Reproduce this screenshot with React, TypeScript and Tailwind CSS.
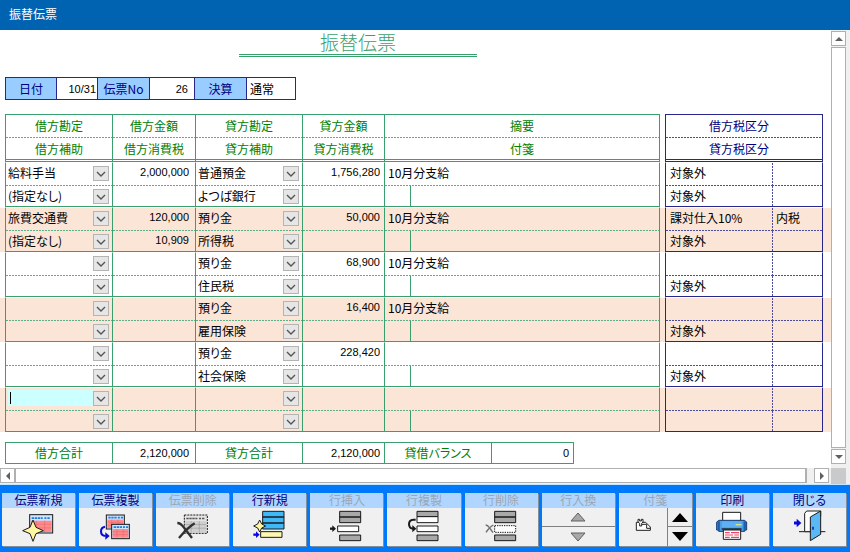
import type { ReactNode } from "react";
import clsx from "clsx";

type Line = {
  debit: [string, string];
  debitAmount: [string, string];
  credit: [string, string];
  creditAmount: [string, string];
  memo: string;
  tax: [string, string];
  taxKind: string;
};

const lines: Line[] = [
  { debit: ["給料手当", "(指定なし)"], debitAmount: ["2,000,000", ""], credit: ["普通預金", "よつば銀行"], creditAmount: ["1,756,280", ""], memo: "10月分支給", tax: ["対象外", "対象外"], taxKind: "" },
  { debit: ["旅費交通費", "(指定なし)"], debitAmount: ["120,000", "10,909"], credit: ["預り金", "所得税"], creditAmount: ["50,000", ""], memo: "10月分支給", tax: ["課対仕入10%", "対象外"], taxKind: "内税" },
  { debit: ["", ""], debitAmount: ["", ""], credit: ["預り金", "住民税"], creditAmount: ["68,900", ""], memo: "10月分支給", tax: ["", "対象外"], taxKind: "" },
  { debit: ["", ""], debitAmount: ["", ""], credit: ["預り金", "雇用保険"], creditAmount: ["16,400", ""], memo: "10月分支給", tax: ["", "対象外"], taxKind: "" },
  { debit: ["", ""], debitAmount: ["", ""], credit: ["預り金", "社会保険"], creditAmount: ["228,420", ""], memo: "", tax: ["", "対象外"], taxKind: "" },
  { debit: ["", ""], debitAmount: ["", ""], credit: ["", ""], creditAmount: ["", ""], memo: "", tax: ["", ""], taxKind: "" },
];

const numeric = "font-['Liberation_Sans',sans-serif] text-[11px] text-right";
const greenDash = "[background:repeating-linear-gradient(90deg,#5fae88_0_2px,transparent_2px_3px)_bottom/100%_1px_no-repeat]";
const navyDash = "[background:repeating-linear-gradient(90deg,#4c4c9c_0_2px,transparent_2px_3px)_bottom/100%_1px_no-repeat]";
const navyDashV = "[background:repeating-linear-gradient(180deg,#4c4c9c_0_2px,transparent_2px_3px)_left/1px_100%_no-repeat]";
const navyDashBoth =
  "[background:repeating-linear-gradient(180deg,#4c4c9c_0_2px,transparent_2px_3px)_left/1px_100%_no-repeat,repeating-linear-gradient(90deg,#4c4c9c_0_2px,transparent_2px_3px)_bottom/100%_1px_no-repeat]";

function Field({ label, value, className }: { label: string; value: string; className?: string }) {
  return <input type="text" aria-label={label} defaultValue={value} className={clsx("block h-[18px] w-full min-w-0 bg-transparent outline-none", className)} />;
}

function Combo({ label, value, active }: { label: string; value: string; active?: boolean }) {
  return (
    <div className="relative flex h-5 items-center pr-[18px] pl-0.5">
      <select aria-label={label} defaultValue={value} className={clsx("h-4 w-full min-w-0 appearance-none outline-none", active ? "bg-[#ccffff]" : "bg-transparent")}>
        <option value={value}>{value}</option>
      </select>
      {active && <span className="absolute top-1 left-1 h-3 w-px bg-black" />}
      <span className="pointer-events-none absolute top-[3px] right-[3px] flex h-[15px] w-4 items-center justify-center border border-[#b4b4b4] bg-[#e6e6e6]">
        <svg width="10" height="6" viewBox="0 0 10 6" fill="none" stroke="#555" strokeWidth="1.4">
          <path d="M1 1l4 4 4-4" />
        </svg>
      </span>
    </div>
  );
}

function EntryRows({ line, index }: { line: Line; index: number }) {
  const no = `${index + 1}行目 `;
  const shade = index % 2 === 1 ? "bg-[#fbe5d6]" : "bg-white";
  const top = "h-6 border-t border-l border-t-white border-l-[#3a9f6e] align-top";
  const bottom = "h-[21px] border-b border-l border-[#3a9f6e] align-top";
  return (
    <tbody className={shade}>
      <tr>
        <td className="border-t border-white" />
        <td className={clsx(top, greenDash)}><Combo label={no + "借方勘定"} value={line.debit[0]} active={index === 5} /></td>
        <td className={clsx(top, greenDash)}><Field label={no + "借方金額"} value={line.debitAmount[0]} className={clsx("pr-1.5", numeric)} /></td>
        <td className={clsx(top, greenDash)}><Combo label={no + "貸方勘定"} value={line.credit[0]} /></td>
        <td className={clsx(top, greenDash)}><Field label={no + "貸方金額"} value={line.creditAmount[0]} className={clsx("pr-1", numeric)} /></td>
        <td colSpan={2} className={clsx(top, greenDash, "border-r border-r-[#3a9f6e]")}><Field label={no + "摘要"} value={line.memo} className="pl-[3px]" /></td>
        <td className="border-t border-white" />
        <td className={clsx("h-6 border-t border-l border-t-white border-l-[#26268c] align-top", navyDash)}><Field label={no + "借方税区分"} value={line.tax[0]} className="pl-1" /></td>
        <td className={clsx("h-6 border-t border-r border-t-white border-r-[#26268c] align-top", navyDashBoth)}><Field label={no + "税処理"} value={line.taxKind} className="pl-1" /></td>
        <td className="border-t border-white" />
      </tr>
      <tr>
        <td />
        <td className={bottom}><Combo label={no + "借方補助"} value={line.debit[1]} /></td>
        <td className={bottom}><Field label={no + "借方消費税"} value={line.debitAmount[1]} className={clsx("pr-1.5", numeric)} /></td>
        <td className={bottom}><Combo label={no + "貸方補助"} value={line.credit[1]} /></td>
        <td className={bottom}><Field label={no + "貸方消費税"} value={line.creditAmount[1]} className={clsx("pr-1", numeric)} /></td>
        <td className={bottom} />
        <td className={clsx(bottom, "border-r")}><Field label={no + "付箋"} value="" className="pl-1" /></td>
        <td />
        <td className="h-[21px] border-b border-l border-[#26268c] align-top"><Field label={no + "貸方税区分"} value={line.tax[1]} className="pl-1" /></td>
        <td className={clsx("h-[21px] border-r border-b border-[#26268c] align-top", navyDashV)} />
        <td />
      </tr>
    </tbody>
  );
}

function VoucherTable() {
  const head1 = clsx("h-6 border-t border-l border-[#3a9f6e] pb-0.5 font-normal", greenDash);
  const head2 = "h-6 border-b-3 border-l border-[#3a9f6e] font-normal [border-bottom-style:double]";
  return (
    <table className="mt-3.5 w-full table-fixed border-separate border-spacing-0">
      <colgroup>
        <col className="w-[5px]" />
        <col className="w-[107px]" />
        <col className="w-[83px]" />
        <col className="w-[107px]" />
        <col className="w-[82px]" />
        <col className="w-[26px]" />
        <col />
        <col className="w-[5px]" />
        <col className="w-[107px]" />
        <col className="w-[51px]" />
        <col className="w-2" />
      </colgroup>
      <thead className="text-[#008000]">
        <tr>
          <td />
          <th className={head1}>借方勘定</th>
          <th className={head1}>借方金額</th>
          <th className={head1}>貸方勘定</th>
          <th className={head1}>貸方金額</th>
          <th colSpan={2} className={clsx(head1, "border-r")}>摘要</th>
          <td />
          <th colSpan={2} className={clsx("h-6 border-x border-t border-[#26268c] pr-2.5 pb-0.5 font-normal text-[#000080]", navyDash)}>借方税区分</th>
          <td />
        </tr>
        <tr>
          <td />
          <th className={head2}>借方補助</th>
          <th className={head2}>借方消費税</th>
          <th className={head2}>貸方補助</th>
          <th className={head2}>貸方消費税</th>
          <th colSpan={2} className={clsx(head2, "border-r")}>付箋</th>
          <td />
          <th colSpan={2} className="h-6 border-x border-b-3 border-[#26268c] pr-2.5 font-normal text-[#000080] [border-bottom-style:double]">貸方税区分</th>
          <td />
        </tr>
      </thead>
      {lines.map((line, i) => (
        <EntryRows key={i} line={line} index={i} />
      ))}
    </table>
  );
}

function Arrow({ d }: { d: string }) {
  return (
    <svg width="8" height="8" viewBox="0 0 8 8" fill="#606060">
      <path d={d} />
    </svg>
  );
}

function ToolLabel({ text, disabled }: { text: string; disabled?: boolean }) {
  return (
    <span className={clsx("block h-[15px] bg-[#b0d6ff] text-center leading-[14px]", disabled ? "text-[#9aa6b4]" : "text-[#000080]")}>{text}</span>
  );
}

function Tool({ text, disabled, box, children }: { text: string; disabled?: boolean; box: string; children: ReactNode }) {
  return (
    <button type="button" disabled={disabled} className="min-w-0 bg-[#f0f0f0] shadow-[1px_1px_0_#7f8fa0]">
      <ToolLabel text={text} disabled={disabled} />
      <svg width="73" height="38" viewBox={box} className="mx-auto block" fill="none" stroke="#1a1a1a" strokeWidth="3">
        {children}
      </svg>
    </button>
  );
}

function Slip({ x, y, w, h, gray }: { x: number; y: number; w: number; h: number; gray?: boolean }) {
  const ink = gray ? "#8c8c8c" : "#e06070";
  const top = y + h * 0.33;
  return (
    <g>
      <rect x={x} y={y} width={w} height={h} fill={gray ? "#e4e4e4" : "#cfe6ff"} strokeDasharray={gray ? "6 3" : undefined} />
      <rect x={x + 3} y={top} width={w - 6} height={y + h - top - 3} fill={gray ? "#d0d0d0" : "#ff8a8a"} stroke="none" />
      <path d={`M${x + 6} ${y + h * 0.19}h${w * 0.48}M${x + w * 0.64} ${y + h * 0.19}h6m3 0h${w * 0.12}`} stroke={gray ? "#555" : "#1f7fe0"} strokeWidth="5" strokeDasharray="7 2" />
      <path d={`M${x + 3} ${y + h * 0.52}h${w - 6}M${x + 3} ${y + h * 0.72}h${w - 6}M${x + w * 0.3} ${top}v${h * 0.62}M${x + w * 0.65} ${top}v${h * 0.62}`} stroke={ink} strokeWidth="1.5" />
    </g>
  );
}

function Toolbar() {
  return (
    <div className="grid grid-cols-11 gap-1 border-t border-[#c4e6ff] bg-[#0078fa] pt-2 pr-1 pb-1.5 pl-0.5">
      <Tool text="伝票新規" box="6 72 219 114">
        <Slip x={89} y={92} w={69} h={55} />
        <path d="M99 108l9 22 22 10-22 9-9 23-9-23-22-9 22-10z" fill="#fff6a4" />
      </Tool>
      <Tool text="伝票複製" box="237 72 219 114">
        <Slip x={319} y={93} w={54} h={42} />
        <Slip x={335} y={121} w={53} h={43} />
        <path d="M315 128q-12 2-12 14 0 14 14 14" stroke="#0a0ad8" strokeWidth="6" />
        <path d="M316 145v22l13-11z" fill="#0a0ad8" stroke="none" />
      </Tool>
      <Tool text="伝票削除" disabled box="468 72 219 114">
        <Slip x={553} y={93} w={69} h={55} gray />
        <path d="M532 117q10 0 20 14l24 31M584 118q-22 14-47 44" stroke="#303030" strokeWidth="7" />
      </Tool>
      <Tool text="行新規" box="9 72 219 114">
        <path d="M98 82h64v17h-64zM98 99h64v18h-64zM98 117h64v18h-64z" fill="#3fb8f8" />
        <path d="M92 143h64v17h-64z" fill="#fff9b0" />
        <path d="M89 108l6 12 12 6-12 6-6 12-6-12-12-6 12-6z" fill="#fff6a4" />
        <path d="M70 152h12" stroke="#0a0ae0" strokeWidth="7" />
        <path d="M78 142v20l11-10z" fill="#0a0ae0" stroke="none" />
      </Tool>
      <Tool text="行挿入" disabled box="240 72 219 114">
        <path d="M329 82h63v17h-63zM329 99h63v17h-63zM329 153h63v17h-63z" fill="#a8a8a8" />
        <path d="M323 126h63v17h-63z" fill="#fff" />
        <path d="M300 134h10" strokeWidth="7" />
        <path d="M307 124v20l11-10z" fill="#1a1a1a" stroke="none" />
      </Tool>
      <Tool text="行複製" disabled box="471 72 219 114">
        <path d="M561 82h63v16h-63zM561 153h63v17h-63z" fill="#a8a8a8" />
        <path d="M561 98h63v18h-63zM561 126h63v17h-63z" fill="#fff" />
        <path d="M557 107h-7q-13 1-13 13 0 14 13 14" strokeWidth="6" />
        <path d="M547 123v22l12-11z" fill="#1a1a1a" stroke="none" />
      </Tool>
      <Tool text="行削除" disabled box="12 72 219 114">
        <path d="M101 82h63v17h-63zM101 99h63v17h-63zM101 153h63v17h-63z" fill="#a8a8a8" />
        <path d="M101 125h63v20h-63z" fill="#fff" strokeDasharray="4 3" />
        <path d="M74 123q6 0 12 9l10 14M97 123q-12 6-22 22" stroke="#707070" strokeWidth="4" />
      </Tool>
      <div className="flex min-w-0 flex-col bg-[#f0f0f0] shadow-[1px_1px_0_#7f8fa0]">
        <ToolLabel text="行入換" disabled />
        <button type="button" disabled aria-label="上の行と入換" className="flex h-[19px] items-center justify-center border-b border-[#808080]">
          <svg width="16" height="10" viewBox="0 0 16 10" fill="#a8a8a8" stroke="#606060"><path d="M8 1l7 8H1z" /></svg>
        </button>
        <button type="button" disabled aria-label="下の行と入換" className="flex h-[19px] items-center justify-center">
          <svg width="16" height="10" viewBox="0 0 16 10" fill="#a8a8a8" stroke="#606060"><path d="M8 9L1 1h14z" /></svg>
        </button>
      </div>
      <div className="min-w-0 bg-[#f0f0f0] shadow-[1px_1px_0_#7f8fa0]">
        <ToolLabel text="付箋" disabled />
        <div className="flex">
          <button type="button" disabled aria-label="付箋" className="flex h-[38px] min-w-0 flex-1 items-center justify-center">
            <svg width="48" height="38" viewBox="474 72 144 114" fill="#fff" stroke="#222" strokeWidth="3">
              <path d="M526 115h28l14 14v10h-42z" />
              <path d="M543 121h14v12h11" fill="none" />
              <path d="M531 106h5v5h5v-5h5v8l-4 4v8h-6v-8l-5-4z" />
            </svg>
          </button>
          <div className="w-[25px] border-l border-[#808080]">
            <button type="button" aria-label="前の付箋" className="flex h-[19px] w-full items-center justify-center border-b border-[#808080]">
              <svg width="16" height="9" viewBox="0 0 16 9"><path d="M8 0l8 9H0z" /></svg>
            </button>
            <button type="button" aria-label="次の付箋" className="flex h-[19px] w-full items-center justify-center">
              <svg width="16" height="9" viewBox="0 0 16 9"><path d="M8 9L0 0h16z" /></svg>
            </button>
          </div>
        </div>
      </div>
      <Tool text="印刷" box="135 72 219 114">
        <path d="M215 85h54v28h-54z" fill="#fff" />
        <path d="M204 109h76l7 5v24h-6v4h-78v-4h-6v-24z" fill="#4c9fe6" stroke="#163a70" />
        <path d="M203 112v28M281 112v28" stroke="#1d5cae" strokeWidth="7" />
        <path d="M213 112h58v18h-58z" fill="#5fb0f2" stroke="none" />
        <path d="M254 122h18" stroke="#d8e48c" strokeWidth="4" />
        <path d="M212 135h60" strokeWidth="4" />
        <path d="M217 138h52v28h-52z" fill="#fff" />
        <path d="M222 146h14m4 0h24M222 153h24m4 0h14M222 160h14m4 0h24" stroke="#f04468" strokeWidth="3.5" />
      </Tool>
      <Tool text="閉じる" box="366 72 219 114">
        <path d="M444 143h79" strokeWidth="3" />
        <path d="M461 143V88l6-7h42v16l-30 20v26z" fill="#fff" />
        <path d="M478 99l31-18v70l-31 19z" fill="#5cb8f4" />
        <path d="M486 128v9" stroke="#0a30b0" strokeWidth="5" />
        <path d="M429 117h11" stroke="#0a0ad8" strokeWidth="9" />
        <path d="M437 104v26l14-13z" fill="#0a0ad8" stroke="none" />
      </Tool>
    </div>
  );
}

export default function App() {
  const tag = "flex items-center justify-center border-r border-[#26268c] bg-[#99ccff] text-[#000080]";
  const sumHead = "border-l border-y border-[#3a9f6e] p-0 font-normal text-[#008000]";
  const sumCell = clsx("border-l border-y border-[#3a9f6e] p-0", numeric);
  const step = "flex items-center justify-center border border-[#b0b0b0] bg-white";
  return (
    <div className="flex min-h-screen flex-col bg-white font-['Noto_Sans_CJK_JP',sans-serif] text-[12px] leading-4 text-black [font-feature-settings:'palt']">
      <header className="h-[30px] bg-[#0063b1] pl-[9px] leading-[28px] text-white">振替伝票</header>
      <div className="flex flex-1">
        <main className="min-w-0 flex-1 pb-1">
          <div className="flex justify-center pt-px pr-[115px]">
            <div className="w-[238px] border-b-3 border-b-[#3a9f6e] pb-px [border-bottom-style:double]">
              <h1 className="text-center text-[19px] leading-[22px] font-light text-[#3a9f6e]">振替伝票</h1>
            </div>
          </div>
          <form className="mt-5 ml-[5px] flex h-[23px] w-[291px] border border-[#26268c]">
            <label htmlFor="date" className={clsx(tag, "w-[51px]")}>日付</label>
            <input id="date" type="text" defaultValue="10/31" className={clsx("w-[41px] border-r border-[#26268c] pr-px outline-none", numeric)} />
            <label htmlFor="number" className={clsx(tag, "w-[52px]")}>伝票No</label>
            <input id="number" type="text" defaultValue="26" className={clsx("w-[45px] border-r border-[#26268c] pr-1.5 outline-none", numeric)} />
            <label htmlFor="closing" className={clsx(tag, "w-[52px]")}>決算</label>
            <input id="closing" type="text" defaultValue="通常" className="w-12 pl-[3px] outline-none" />
          </form>
          <VoucherTable />
          <table className="mt-2.5 ml-[5px] w-[569px] table-fixed border-separate border-spacing-0">
            <tbody>
              <tr className="h-[22px]">
                <th scope="row" className={clsx(sumHead, "w-[107px]")}>借方合計</th>
                <td className={clsx(sumCell, "w-[83px] pr-1.5")}>2,120,000</td>
                <th scope="row" className={clsx(sumHead, "w-[107px]")}>貸方合計</th>
                <td className={clsx(sumCell, "w-[82px] pr-1")}>2,120,000</td>
                <th scope="row" className={clsx(sumHead, "w-[107px]")}>貸借バランス</th>
                <td className={clsx(sumCell, "border-r pr-1")}>0</td>
              </tr>
            </tbody>
          </table>
        </main>
        <div className="flex w-[19px] bg-[#f0f0f0]">
          <div className="flex w-[15px] flex-col gap-px pt-px pb-1">
            <button type="button" aria-label="上へスクロール" className={clsx(step, "h-[15px]")}><Arrow d="M4 2l4 4H0z" /></button>
            <div className="flex-1 border border-[#b0b0b0] bg-white" />
            <button type="button" aria-label="下へスクロール" className={clsx(step, "h-[15px]")}><Arrow d="M4 6L0 2h8z" /></button>
          </div>
        </div>
      </div>
      <div className="flex h-4 bg-[#f0f0f0]">
        <button type="button" aria-label="左へスクロール" className={clsx(step, "mb-px w-[15px]")}><Arrow d="M2 4l4-4v8z" /></button>
        <div className="mb-px flex-1 border border-r-2 border-[#b0b0b0] bg-white" />
        <button type="button" aria-label="右へスクロール" className={clsx(step, "mr-0.5 mb-px ml-[7px] w-[15px]")}><Arrow d="M6 4L2 0v8z" /></button>
        <div className="mr-1 w-[15px] bg-[#c8cacc]" />
      </div>
      <Toolbar />
    </div>
  );
}
